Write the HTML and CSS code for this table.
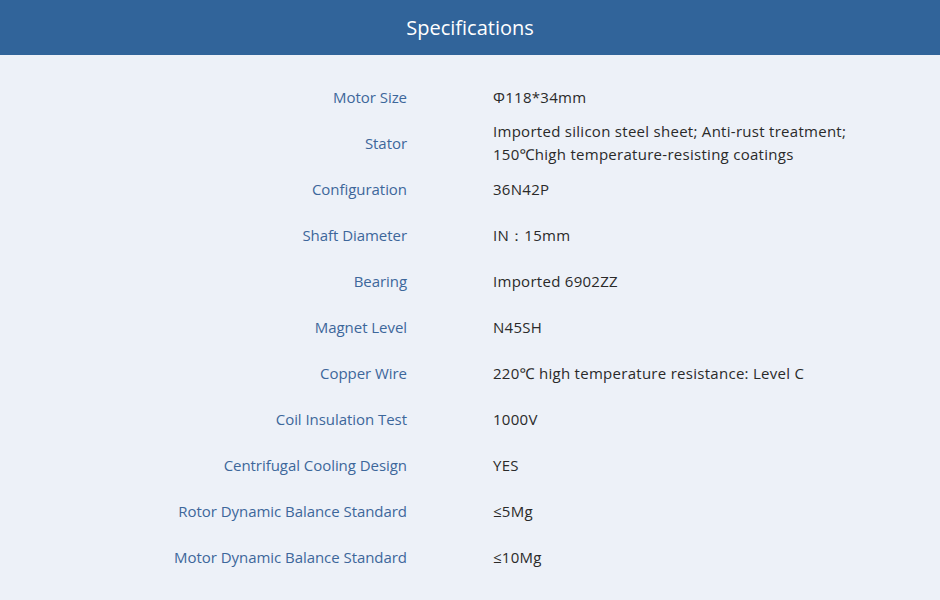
FILE: index.html
```html
<!DOCTYPE html>
<html lang="en">
<head>
<meta charset="utf-8">
<title>Specifications</title>
<link rel="stylesheet" href="styles.css">
</head>
<body>
<header class="header">Specifications</header>
<main class="specs">
  <div class="label">Motor Size</div><div class="value">Φ118*34mm</div>
  <div class="label">Stator</div><div class="value">Imported silicon steel sheet; Anti-rust treatment;<br>150℃high temperature-resisting coatings</div>
  <div class="label">Configuration</div><div class="value">36N42P</div>
  <div class="label">Shaft Diameter</div><div class="value">IN：15mm</div>
  <div class="label">Bearing</div><div class="value">Imported 6902ZZ</div>
  <div class="label">Magnet Level</div><div class="value">N45SH</div>
  <div class="label">Copper Wire</div><div class="value">220℃ high temperature resistance: Level C</div>
  <div class="label">Coil Insulation Test</div><div class="value">1000V</div>
  <div class="label">Centrifugal Cooling Design</div><div class="value">YES</div>
  <div class="label">Rotor Dynamic Balance Standard</div><div class="value">≤5Mg</div>
  <div class="label">Motor Dynamic Balance Standard</div><div class="value">≤10Mg</div>
</main>
</body>
</html>
```
FILE: styles.css
```css
html, body {
  margin: 0;
  padding: 0;
  background: #edf1f8;
  font-family: "Open Sans", "Noto Sans", sans-serif;
}
.header {
  height: 55px;
  background: #31649a;
  color: #ffffff;
  font-size: 20px;
  display: flex;
  align-items: center;
  justify-content: center;
  padding-bottom: 1px;
  box-sizing: border-box;
}
.specs {
  display: grid;
  grid-template-columns: 407px 1fr;
  column-gap: 86px;
  grid-auto-rows: 46px;
  align-items: center;
  padding-top: 19px;
  font-size: 15px;
  line-height: 23px;
}
.label {
  text-align: right;
  color: #3d679b;
  letter-spacing: -0.05px;
}
.value {
  color: #2a2a2a;
  letter-spacing: 0.28px;
}
```
